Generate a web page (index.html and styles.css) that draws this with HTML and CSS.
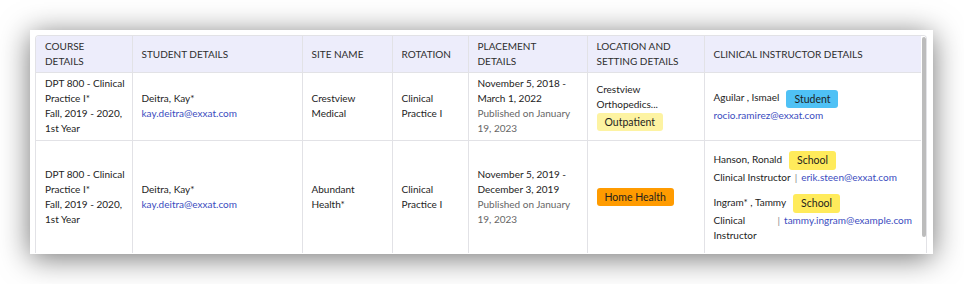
FILE: index.html
```html
<!DOCTYPE html>
<html lang="en">
<head>
    <meta charset="UTF-8">
    <title>Placements</title>
    <link rel="stylesheet" href="styles.css">
</head>
<body>
    <div class="card">
        <div class="table-wrap">
            <div class="table-scroll">
                <table class="placements">
                    <colgroup>
                        <col class="c-course">
                        <col class="c-student">
                        <col class="c-site">
                        <col class="c-rotation">
                        <col class="c-placement">
                        <col class="c-location">
                        <col class="c-instructor">
                    </colgroup>
                    <thead>
                        <tr>
                            <th>Course Details</th>
                            <th>Student Details</th>
                            <th>Site Name</th>
                            <th>Rotation</th>
                            <th>Placement Details</th>
                            <th>Location and Setting Details</th>
                            <th>Clinical Instructor Details</th>
                        </tr>
                    </thead>
                    <tbody>
                        <tr>
                            <td>
                                <div>DPT 800 - Clinical Practice I*</div>
                                <div>Fall, 2019 - 2020, 1st Year</div>
                            </td>
                            <td>
                                <div>Deitra, Kay*</div>
                                <a class="email" href="#">kay.deitra@exxat.com</a>
                            </td>
                            <td>Crestview Medical</td>
                            <td>Clinical Practice I</td>
                            <td>
                                <div>November 5, 2018 - March 1, 2022</div>
                                <div class="muted">Published on January 19, 2023</div>
                            </td>
                            <td>
                                <div>Crestview Orthopedics...</div>
                                <span class="badge badge-outpatient">Outpatient</span>
                            </td>
                            <td class="ci-cell">
                                <div class="ci">
                                    <div class="ci-name">
                                        <span>Aguilar , Ismael</span>
                                        <span class="badge badge-student">Student</span>
                                    </div>
                                    <a class="email" href="#">rocio.ramirez@exxat.com</a>
                                </div>
                            </td>
                        </tr>
                        <tr>
                            <td>
                                <div>DPT 800 - Clinical Practice I*</div>
                                <div>Fall, 2019 - 2020, 1st Year</div>
                            </td>
                            <td>
                                <div>Deitra, Kay*</div>
                                <a class="email" href="#">kay.deitra@exxat.com</a>
                            </td>
                            <td>Abundant Health*</td>
                            <td>Clinical Practice I</td>
                            <td>
                                <div>November 5, 2019 - December 3, 2019</div>
                                <div class="muted">Published on January 19, 2023</div>
                            </td>
                            <td>
                                <span class="badge badge-home">Home Health</span>
                            </td>
                            <td class="ci-cell">
                                <div class="ci">
                                    <div class="ci-name">
                                        <span>Hanson, Ronald</span>
                                        <span class="badge badge-school">School</span>
                                    </div>
                                    <div class="ci-role">
                                        <span class="role">Clinical Instructor</span>
                                        <span class="sep">|</span>
                                        <a class="email" href="#">erik.steen@exxat.com</a>
                                    </div>
                                </div>
                                <div class="ci">
                                    <div class="ci-name">
                                        <span>Ingram* , Tammy</span>
                                        <span class="badge badge-school">School</span>
                                    </div>
                                    <div class="ci-role">
                                        <span class="role">Clinical Instructor</span>
                                        <span class="sep">|</span>
                                        <a class="email" href="#">tammy.ingram@example.com</a>
                                    </div>
                                </div>
                            </td>
                        </tr>
                        <tr class="row-next">
                            <td></td>
                            <td></td>
                            <td></td>
                            <td></td>
                            <td></td>
                            <td></td>
                            <td></td>
                        </tr>
                    </tbody>
                </table>
            </div>
            <div class="scrollbar">
                <div class="scrollbar-thumb"></div>
            </div>
        </div>
    </div>
</body>
</html>
```

FILE: styles.css
```css
:root {
    --text: #232323;
    --muted: #666;
    --link: #3a4cc0;
    --line: #e2e2e6;
    --head-bg: #ededfb;
}
body {
    margin: 0;
    padding: 30px;
    background: #fff;
    font-family: Lato, "Open Sans", sans-serif;
    font-size: 10px;
    line-height: 15px;
    color: var(--text);
}
.card {
    width: 892px;
    padding: 5px 6px 1px 5px;
    background: #fff;
    box-shadow: 0 4px 28px rgba(0, 0, 0, 0.55);
}
.table-wrap {
    display: flex;
    height: 217px;
    border: 1px solid var(--line);
    border-bottom: 0;
    border-radius: 4px 4px 0 0;
    overflow: hidden;
}
.table-scroll {
    flex: none;
    width: 885px;
    overflow: hidden;
}
.scrollbar {
    flex: none;
    width: 5px;
    padding-top: 1px;
    background: #fff;
}
.scrollbar-thumb {
    height: 200px;
    margin-left: 1px;
    background: #bcbcbc;
    border-radius: 3px;
}
.placements {
    width: 885px;
    table-layout: fixed;
    border-collapse: collapse;
    border-style: hidden;
}
.c-course { width: 96px; }
.c-student { width: 170px; }
.c-site { width: 90px; }
.c-rotation { width: 76px; }
.c-placement { width: 119px; }
.c-location { width: 117px; }
.c-instructor { width: 217px; }
th, td {
    border: 1px solid var(--line);
    text-align: left;
    vertical-align: middle;
}
th {
    background: var(--head-bg);
    font-weight: 400;
    text-transform: uppercase;
    padding: 3px 14px 3px 9px;
    height: 30px;
    color: #2e2e2e;
}
td {
    padding: 3px 6px 4px 9px;
}
td.ci-cell {
    padding: 10px 9px;
}
.row-next td {
    height: 20px;
    padding: 0;
}
.email {
    color: var(--link);
    text-decoration: none;
}
.muted {
    color: var(--muted);
}
.badge {
    display: inline-block;
    height: 18px;
    line-height: 18px;
    padding: 0 8px;
    border-radius: 3px;
    font-size: 10.5px;
    color: #1e1e1e;
}
.badge-outpatient {
    display: block;
    width: fit-content;
    margin-top: 1px;
    background: #fdf3a2;
}
.badge-home {
    background: #ff9b00;
}
.badge-student {
    background: #4fc1f5;
}
.badge-school {
    background: #ffeb5b;
    height: 19px;
}
.ci + .ci {
    margin-top: 9px;
}
.ci-name {
    display: flex;
    align-items: center;
    gap: 7px;
}
.ci-name span:first-child {
    margin-top: -3px;
}
.ci-role {
    display: flex;
    align-items: flex-start;
}
.ci-role .role {
    flex: 0 1 auto;
}
.ci-role .sep {
    flex: none;
    margin: 0 4px;
    color: #888;
}
.ci-role .email {
    flex: none;
}
```
